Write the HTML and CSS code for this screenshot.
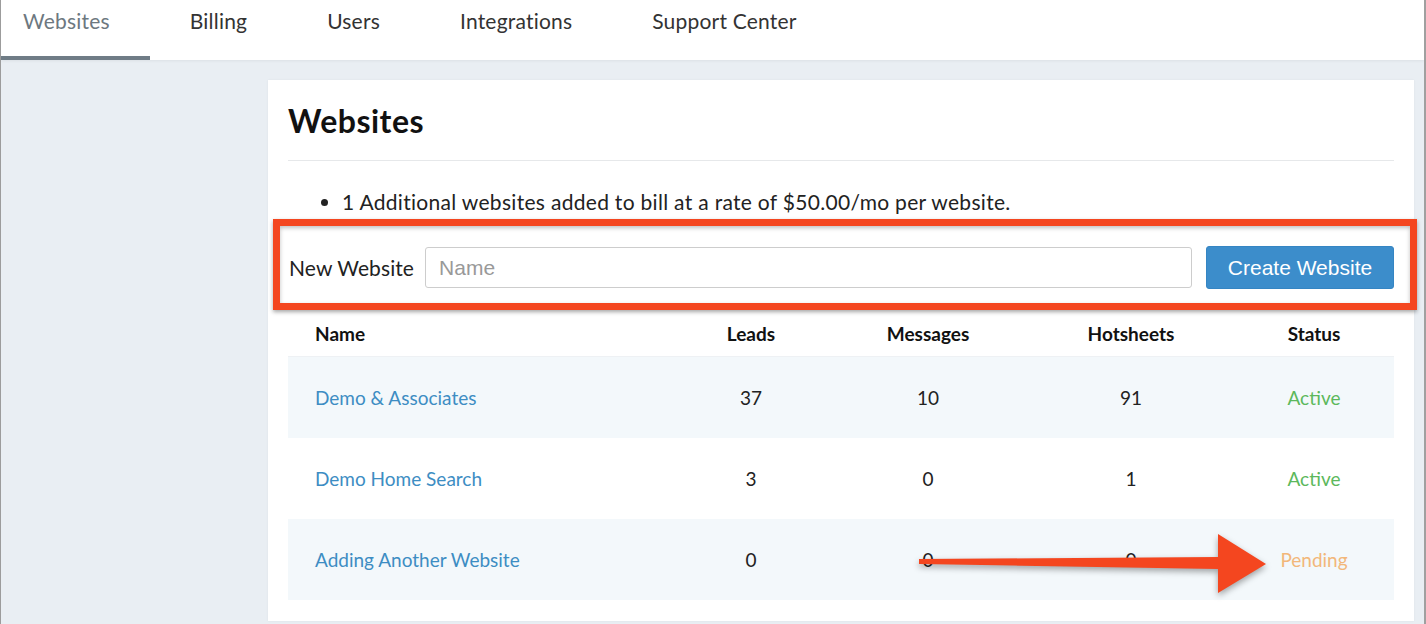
FILE: index.html
```html
<!DOCTYPE html>
<html lang="en">
<head>
<meta charset="utf-8">
<title>Websites</title>
<link rel="stylesheet" href="styles.css">
</head>
<body>
<div class="window">
  <nav class="tabs">
    <a class="tab tab-active">Websites</a>
    <a class="tab">Billing</a>
    <a class="tab">Users</a>
    <a class="tab">Integrations</a>
    <a class="tab">Support Center</a>
  </nav>
  <main class="main">
    <section class="card">
      <h1 class="title">Websites</h1>
      <hr class="rule">
      <ul class="notes">
        <li>1 Additional websites added to bill at a rate of $50.00/mo per website.</li>
      </ul>
      <form class="new-site">
        <label class="new-label" for="site-name">New Website</label>
        <input class="new-input" id="site-name" type="text" placeholder="Name">
        <button class="btn-create" type="button">Create Website</button>
      </form>
      <table class="sites">
        <colgroup>
          <col class="c-name"><col class="c-leads"><col class="c-msg"><col class="c-hot"><col class="c-status">
        </colgroup>
        <thead>
          <tr><th class="left">Name</th><th>Leads</th><th>Messages</th><th>Hotsheets</th><th>Status</th></tr>
        </thead>
        <tbody>
          <tr class="stripe"><td class="left"><a class="site-link">Demo &amp; Associates</a></td><td>37</td><td>10</td><td>91</td><td class="status-active">Active</td></tr>
          <tr><td class="left"><a class="site-link">Demo Home Search</a></td><td>3</td><td>0</td><td>1</td><td class="status-active">Active</td></tr>
          <tr class="stripe"><td class="left"><a class="site-link">Adding Another Website</a></td><td>0</td><td>0</td><td>0</td><td class="status-pending">Pending</td></tr>
        </tbody>
      </table>
    </section>
  </main>
  <div class="callout-box"></div>
  <svg class="callout-arrow" width="1426" height="624" viewBox="0 0 1426 624" aria-hidden="true">
    <polygon points="919,559 1218,557 1218,534 1266,564 1218,593 1218,569 919,564" fill="#f4461f"/>
  </svg>
</div>
</body>
</html>
```
FILE: styles.css
```css
html, body {
  margin: 0;
  padding: 0;
}
body {
  font-family: Lato, "Noto Sans", sans-serif;
  color: #222;
  background: #e9eef3;
}
.window {
  position: relative;
  width: 1426px;
  height: 624px;
  overflow: hidden;
  box-sizing: border-box;
  border-left: 1px solid #9c9c9c;
  border-right: 2px solid #a0a0a0;
  background: #e9eef3;
}
.tabs {
  display: flex;
  height: 60px;
  background: #fff;
  box-shadow: 0 1px 3px rgba(0, 0, 0, 0.06);
  position: relative;
  z-index: 1;
}
.tab {
  display: block;
  box-sizing: border-box;
  height: 60px;
  padding: 9px 40px 0;
  font-size: 21px;
  line-height: 24px;
  color: #333;
  letter-spacing: 0.2px;
  white-space: nowrap;
}
.tab:first-child {
  padding-left: 22px;
}
.tab-active {
  color: #6d7880;
  border-bottom: 4px solid #6f7c86;
}
.main {
  display: flex;
  padding: 20px 0 0 267px;
}
.card {
  width: 1146px;
  height: 541px;
  box-sizing: border-box;
  background: #fff;
  padding: 0 20px;
  box-shadow: 0 0 2px rgba(0, 0, 0, 0.06);
}
.title {
  margin: 23px 0 0;
  font-size: 32px;
  line-height: 36px;
  font-weight: 700;
  letter-spacing: 0.5px;
  color: #111;
}
.rule {
  margin: 21px 0 0;
  border: 0;
  border-top: 1px solid #e6e8ea;
  height: 0;
}
.notes {
  margin: 27px 0 0;
  padding-left: 54px;
  font-size: 21px;
  line-height: 28px;
  letter-spacing: 0.3px;
  color: #222;
}
.new-site {
  display: flex;
  align-items: center;
  margin-top: 30px;
  height: 43px;
}
.new-label {
  flex: none;
  white-space: nowrap;
  font-size: 21px;
  letter-spacing: 0.1px;
  color: #222;
  margin: 0 11px 0 1px;
}
.new-input {
  flex: 1;
  min-width: 0;
  box-sizing: border-box;
  height: 41px;
  border: 1px solid #cdcdcd;
  border-radius: 3px;
  padding: 0 13px;
  font-family: "Liberation Sans", Arial, sans-serif;
  font-size: 21px;
  color: #333;
}
.new-input::placeholder {
  color: #999;
}
.btn-create {
  flex: none;
  box-sizing: border-box;
  margin-left: 14px;
  width: 188px;
  height: 43px;
  border: 1px solid #3585c3;
  border-radius: 3px;
  background: #3c8dcb;
  color: #fff;
  font-family: "Liberation Sans", Arial, sans-serif;
  font-size: 21px;
}
.sites {
  margin-top: 22px;
  width: 1106px;
  border-collapse: collapse;
  table-layout: fixed;
}
.c-name { width: 386px; }
.c-leads { width: 154px; }
.c-msg { width: 200px; }
.c-hot { width: 206px; }
.c-status { width: 160px; }
.sites th {
  height: 45px;
  padding: 0;
  font-size: 19px;
  font-weight: 700;
  color: #111;
  text-align: center;
  border-bottom: 1px solid #eef1f4;
}
.sites td {
  height: 81px;
  padding: 0;
  font-size: 19px;
  color: #222;
  text-align: center;
}
.sites .left {
  text-align: left;
  padding-left: 27px;
}
.stripe {
  background: #f3f8fb;
}
.site-link {
  color: #3d8dc3;
}
.sites .status-active {
  color: #5cb85c;
}
.sites .status-pending {
  color: #f2b77a;
}
.callout-box {
  position: absolute;
  left: 272px;
  top: 219px;
  width: 1144px;
  height: 91px;
  box-sizing: border-box;
  border: 7px solid #f4461f;
  box-shadow: 0 2px 4px rgba(0, 0, 0, 0.35), inset 0 2px 4px rgba(0, 0, 0, 0.25);
  z-index: 2;
}
.callout-arrow {
  position: absolute;
  left: -1px;
  top: 0;
  z-index: 2;
  filter: drop-shadow(0 3px 3px rgba(0, 0, 0, 0.35));
}
```
